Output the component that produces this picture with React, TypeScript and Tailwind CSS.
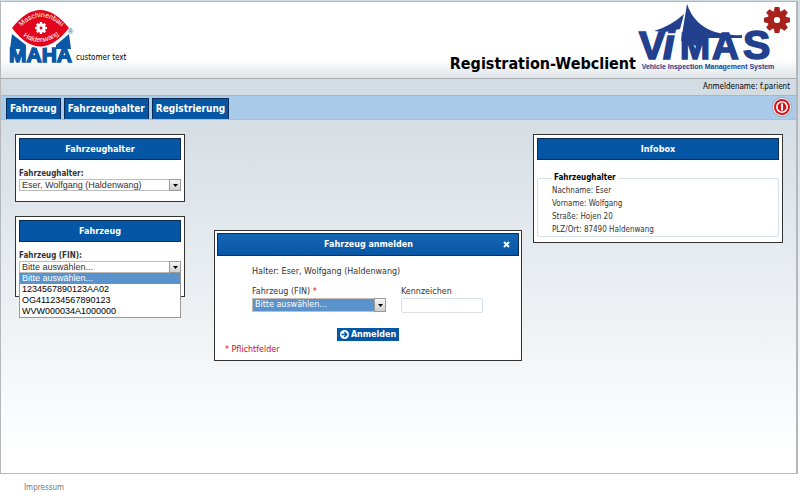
import { useState } from 'react'
import type { ReactNode } from 'react'

const FAHRZEUGE = ['Bitte auswählen...', '1234567890123AA02', 'OG411234567890123', 'WVW000034A1000000']

const HALTER = [
  { label: 'Nachname', wert: 'Eser' },
  { label: 'Vorname', wert: 'Wolfgang' },
  { label: 'Straße', wert: 'Hojen 20' },
  { label: 'PLZ/Ort', wert: '87490 Haldenwang' },
]

const MENU = ['Fahrzeug', 'Fahrzeughalter', 'Registrierung']

const ZAEHNE = [0, 45, 90, 135, 180, 225, 270, 315]

function Gear({ x, y, r, fill, hole }: { x: number; y: number; r: number; fill: string; hole: string }) {
  return (
    <g transform={`translate(${x} ${y})`}>
      <circle r={r * 0.72} fill={fill} />
      {ZAEHNE.map(a => (
        <path
          key={a}
          transform={`rotate(${a})`}
          d={`M${-r * 0.26} ${-r * 0.6} L${-r * 0.18} ${-r} H${r * 0.18} L${r * 0.26} ${-r * 0.6} Z`}
          fill={fill}
        />
      ))}
      <circle r={r * 0.24} fill={hole} />
    </g>
  )
}

function MahaLogo() {
  return (
    <svg width="70" height="60" viewBox="6 7 70 60" role="img" aria-label="MAHA">
      <path d="M12 33 L26 44 V48 H10 Z M69 33 L56 44 V48 H71 Z" fill="#0b58a6" />
      <text
        x="40.5"
        y="61"
        textAnchor="middle"
        fontSize="21"
        fontWeight="700"
        fontFamily="'Liberation Sans', sans-serif"
        fill="#0b58a6"
        stroke="#0b58a6"
        strokeWidth="1.4"
      >
        MAHA
      </text>
      <path d="M10 27 Q40 -11 71 27 Q40 67 10 27 Z" fill="#fff" />
      <path d="M12 27 Q40 -9 69 27 Q40 64 12 27 Z" fill="#e3051b" />
      <defs>
        <path id="maha-oben" d="M20 27 Q41 5 63 27" />
        <path id="maha-unten" d="M21 34 Q41 49 61 32" />
      </defs>
      <g fontSize="7" fontFamily="'Liberation Sans', sans-serif" fill="#fff" textAnchor="middle">
        <text><textPath href="#maha-oben" startOffset="50%">Maschinenbau</textPath></text>
        <text><textPath href="#maha-unten" startOffset="50%">Haldenwang</textPath></text>
      </g>
      <Gear x={41} y={27} r={6} fill="#fff" hole="#e3051b" />
      <text x="68" y="33" fontSize="7" fontFamily="'Liberation Sans', sans-serif" fill="#0b58a6">®</text>
    </svg>
  )
}

function VimasLogo() {
  return (
    <svg width="154" height="70" viewBox="638 1 154 70" role="img" aria-label="ViMAS Vehicle Inspection Management System">
      {/* Zeltdach */}
      <path d="M654 30 Q671 25 684 13 L680 28 L665 31 Z" fill="#22408e" />
      <path d="M687 3 Q694 24 715 31 Q728 35 742 34 V37 H717 L709 37 L697 46 L689 40 H681 Z" fill="#22408e" />
      <text
        y="58"
        fontFamily="'Liberation Sans', sans-serif"
        fontWeight="700"
        fill="#22408e"
        stroke="#22408e"
        strokeWidth="1.6"
      >
        <tspan x="639" fontSize="39">V</tspan>
        <tspan x="663" fontSize="42" fontStyle="italic">i</tspan>
        <tspan x="680" fontSize="36">M</tspan>
        <tspan x="712" fontSize="37">A</tspan>
        <tspan x="743" fontSize="41">S</tspan>
      </text>
      <text
        x="708"
        y="68"
        textAnchor="middle"
        fontSize="7"
        fontWeight="700"
        fontFamily="'Liberation Sans', sans-serif"
        fill="#22408e"
      >
        Vehicle Inspection Management System
      </text>
      <Gear x={777} y={19} r={13} fill="#a9211c" hole="#fff" />
    </svg>
  )
}

function PowerIcon() {
  return (
    <svg width="20" height="20" viewBox="0 0 20 20" aria-hidden="true">
      <circle cx="10" cy="10" r="9.5" fill="#fbf5f5" stroke="#8f9aa6" strokeWidth="0.8" />
      <circle cx="10" cy="10" r="8" fill="#d3141c" />
      <circle cx="10" cy="10" r="5.2" fill="#d3141c" stroke="#fff" strokeWidth="1.6" />
      <path d="M10 6.5 V13.5" stroke="#fff" strokeWidth="2" />
    </svg>
  )
}

function Pfeil() {
  return (
    <span className="pointer-events-none absolute inset-y-0 right-0 flex w-3 items-center justify-center border border-[#9a9a9a] bg-linear-to-b from-[#f5f5f5] to-[#cfcfcf]">
      <svg width="5" height="3" viewBox="0 0 5 3" aria-hidden="true">
        <path d="M0 0 H5 L2.5 3 Z" fill="#000" />
      </svg>
    </span>
  )
}

function Panel({ titel, children }: { titel: string; children: ReactNode }) {
  return (
    <section className="border border-[#333] bg-white p-[3px]">
      <h2 className="border border-[#0a2c55] bg-[#0556a4] text-center text-[9px] leading-5 font-bold text-white">{titel}</h2>
      {children}
    </section>
  )
}

export default function App() {
  const [fin, setFin] = useState(FAHRZEUGE[0])
  const [kennzeichen, setKennzeichen] = useState('')

  return (
    <div className="min-h-screen bg-linear-to-b from-[#d3dce3] from-20% to-white to-90% pt-px pr-0.5 font-['DejaVu_Sans_Condensed','DejaVu_Sans',sans-serif] text-[8px] text-[#333]">
      <div className="border border-r-2 border-[#b4b8bb]">
        {/* Kopf */}
        <header className="flex h-[77px] justify-between border-b border-[#a9aeb2] bg-linear-to-b from-white from-75% to-[#dfe5e9]">
          <div className="flex items-end pb-2.5 pl-[5px]">
            <MahaLogo />
            <span className="pb-1 text-black">customer text</span>
          </div>
          <div className="flex items-start gap-0.5 pr-1">
            <h1 className="mt-[52px] text-[16px] leading-5 font-bold text-black">Registration-Webclient</h1>
            <VimasLogo />
          </div>
        </header>
        <div className="border-b border-[#a9b4bd] pr-1.5 text-right leading-4 text-black">Anmeldename: f.parient</div>

        <nav className="flex h-6 items-end border-b border-[#b3bcc3] bg-[#a9cae9] pl-[5px]">
          <ul className="flex grow gap-[3px]">
            {MENU.map(m => (
              <li key={m}>
                <a href="#" className="block border border-b-0 border-[#0a2c55] bg-[#0556a4] px-[3px] text-[10px] leading-5 font-bold text-white">{m}</a>
              </li>
            ))}
          </ul>
          <button type="button" aria-label="Abmelden" className="mr-1 mb-0.5">
            <PowerIcon />
          </button>
        </nav>

        <div className="flex min-h-[353px] items-start pt-3.5 pr-[13px] pl-3.5">
          <aside className="flex w-[170px] shrink-0 flex-col gap-3.5">
            <Panel titel="Fahrzeughalter">
              <div className="pt-2 pb-[7px]">
                <label htmlFor="halter" className="block leading-[11px] font-bold">Fahrzeughalter:</label>
                <div className="relative">
                  <select id="halter" className="block h-3 w-full appearance-none border border-[#bbb] bg-white pl-0.5 font-['Liberation_Sans',sans-serif] text-[9px] leading-[10px] text-[#333]">
                    <option>Eser, Wolfgang (Haldenwang)</option>
                  </select>
                  <Pfeil />
                </div>
              </div>
            </Panel>

            <Panel titel="Fahrzeug">
              <div className="pt-2 pb-5">
                <label htmlFor="fahrzeug" className="block leading-[11px] font-bold">Fahrzeug (FIN):</label>
                <div className="relative font-['Liberation_Sans',sans-serif] text-[9px] leading-[11px]">
                  <select
                    id="fahrzeug"
                    value={fin}
                    onChange={e => setFin(e.target.value)}
                    className="block h-3 w-full appearance-none border border-[#bbb] bg-white pl-0.5 leading-[10px] text-[#333]"
                  >
                    {FAHRZEUGE.map(f => <option key={f}>{f}</option>)}
                  </select>
                  <Pfeil />
                  <ul role="listbox" aria-label="Fahrzeug (FIN)" className="absolute top-full right-0 left-0 border border-t-0 border-[#999] bg-white text-black">
                    {FAHRZEUGE.map(f => (
                      <li
                        key={f}
                        role="option"
                        aria-selected={f === fin}
                        onClick={() => setFin(f)}
                        className="px-0.5 aria-selected:bg-[#5a92cb] aria-selected:text-white"
                      >
                        {f}
                      </li>
                    ))}
                  </ul>
                </div>
              </div>
            </Panel>
          </aside>

          {/* Dialog */}
          <main className="mt-24 ml-[29px] min-w-0 max-w-[308px] grow">
            <form
              role="dialog"
              aria-labelledby="dialog-titel"
              className="border border-[#333] bg-white p-0.5 font-['DejaVu_Sans',sans-serif]"
              onSubmit={e => e.preventDefault()}
            >
              <div className="flex items-center border border-[#0a2c55] bg-linear-to-b from-[#1565b5] to-[#0556a4] pr-2 pl-4 text-white">
                <h2 id="dialog-titel" className="grow text-center leading-[21px] font-bold">Fahrzeug anmelden</h2>
                <button type="button" aria-label="Schließen">
                  <svg width="7" height="7" viewBox="0 0 7 7" aria-hidden="true">
                    <path d="M1 1 L6 6 M6 1 L1 6" stroke="#fff" strokeWidth="2" />
                  </svg>
                </button>
              </div>
              <div className="px-[35px] pt-2.5">
                <p className="leading-3">Halter: Eser, Wolfgang (Haldenwang)</p>
                <div className="mt-2 flex gap-[15px]">
                  <div className="w-[134px]">
                    <label htmlFor="fin" className="block leading-3">Fahrzeug (FIN) <span className="text-[#e2001a]">*</span></label>
                    <div className="relative">
                      <select id="fin" className="block h-3.5 w-full appearance-none border border-[#c9bcb4] bg-[#5a92cb] pl-0.5 leading-3 text-white">
                        {FAHRZEUGE.map(f => <option key={f}>{f}</option>)}
                      </select>
                      <Pfeil />
                    </div>
                  </div>
                  <div className="w-[82px]">
                    <label htmlFor="kennzeichen" className="block leading-3">Kennzeichen</label>
                    <input
                      id="kennzeichen"
                      value={kennzeichen}
                      onChange={e => setKennzeichen(e.target.value)}
                      className="block h-[15px] w-full rounded-xs border border-[#d5e0e8] bg-white px-0.5"
                    />
                  </div>
                </div>
              </div>
              <div className="mt-[15px] flex justify-center">
                <button type="submit" className="flex items-center gap-0.5 bg-[#0556a4] px-[3px] leading-[13px] font-bold text-white">
                  <svg width="9" height="9" viewBox="0 0 9 9" aria-hidden="true">
                    <circle cx="4.5" cy="4.5" r="4.5" fill="#fff" />
                    <path d="M1.5 4.5 H6 M4.3 2 L6.8 4.5 L4.3 7" fill="none" stroke="#0556a4" strokeWidth="1.4" />
                  </svg>
                  Anmelden
                </button>
              </div>
              <p className="mt-[3px] pb-0.5 pl-2 leading-3 text-[#e2001a]">* Pflichtfelder</p>
            </form>
          </main>

          <aside className="ml-auto w-[250px] shrink-0">
            <Panel titel="Infobox">
              <fieldset className="mt-3 mb-0.5 rounded-xs border border-[#d5e0e8] px-3.5">
                <legend className="px-0.5 leading-3 font-bold text-black">Fahrzeughalter</legend>
                {HALTER.map(h => (
                  <p key={h.label} className="leading-[13px]">{h.label}: {h.wert}</p>
                ))}
              </fieldset>
            </Panel>
          </aside>
        </div>
      </div>
      <footer className="px-6 pt-2 leading-3 text-[#777]">
        <a href="#">Impressum</a>
      </footer>
    </div>
  )
}
